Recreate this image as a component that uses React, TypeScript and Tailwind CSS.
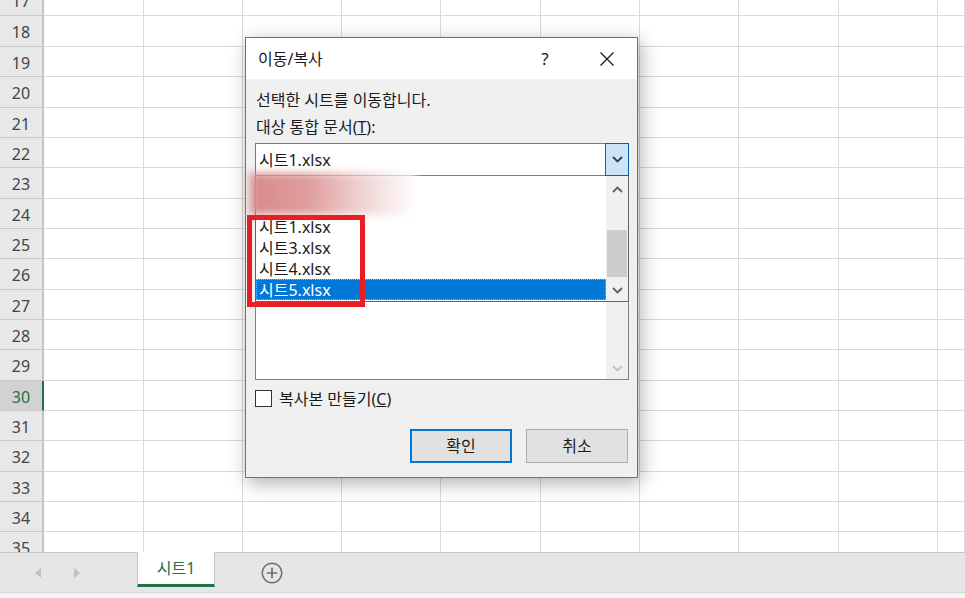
import React from "react";

const FONT = "font-['Noto_Sans','Noto_Sans_CJK_KR',sans-serif]";

// row number + height (px, incl. bottom border)
const ROWS: { n: number; h: string }[] = [
  { n: 17, h: "h-[31px]" },
  { n: 18, h: "h-[31px]" },
  { n: 19, h: "h-[30px]" },
  { n: 20, h: "h-[31px]" },
  { n: 21, h: "h-[30px]" },
  { n: 22, h: "h-[30px]" },
  { n: 23, h: "h-[31px]" },
  { n: 24, h: "h-[30px]" },
  { n: 25, h: "h-[30px]" },
  { n: 26, h: "h-[31px]" },
  { n: 27, h: "h-[30px]" },
  { n: 28, h: "h-[30px]" },
  { n: 29, h: "h-[31px]" },
  { n: 30, h: "h-[30px]" },
  { n: 31, h: "h-[30px]" },
  { n: 32, h: "h-[31px]" },
  { n: 33, h: "h-[30px]" },
  { n: 34, h: "h-[30px]" },
  { n: 35, h: "h-[31px]" },
];

const COLS = 10;

function Chevron({ up = false, color = "#5f5f5f" }: { up?: boolean; color?: string }) {
  return (
    <svg width="11" height="7" viewBox="0 0 11 7">
      <path
        d={up ? "M1 6 L5.5 1.5 L10 6" : "M1 1 L5.5 5.5 L10 1"}
        fill="none"
        stroke={color}
        strokeWidth="1.8"
      />
    </svg>
  );
}

function Sheet() {
  return (
    <div className="h-[552px] overflow-hidden bg-white">
      <div className="-mt-[15px]">
        {ROWS.map((r) => {
          const active = r.n === 30;
          return (
            <div
              key={r.n}
              className={`grid grid-cols-[44px_100px_99px_99px_99px_100px_99px_99px_100px_99px_1fr] ${r.h}`}
            >
              <div
                className={`flex items-center justify-center border-b border-[#c9c9c9] text-[16px] leading-none pt-[2px] ${
                  active
                    ? "bg-[#d2d2d2] text-[#217346] border-r-2 border-r-[#217346]"
                    : "bg-[#e8e8e8] text-[#444] border-r-2 border-r-[#c4c4c4]"
                }`}
              >
                {r.n}
              </div>
              {Array.from({ length: COLS }).map((_, i) => (
                <div key={i} className="border-b border-r border-[#dadada]" />
              ))}
            </div>
          );
        })}
      </div>
    </div>
  );
}

function TabBar() {
  return (
    <div className="h-[46px] flex flex-col">
      <div className="h-[40px] bg-[#e6e6e6] border-t border-[#c6c6c6] flex">
        <div className="w-[137px] flex items-center">
          <div className="w-[41px] flex justify-end">
            <svg width="6" height="10" viewBox="0 0 6 10">
              <path d="M6 0 L0 5 L6 10 Z" fill="#c2c2c2" />
            </svg>
          </div>
          <div className="w-[39px] flex justify-end">
            <svg width="6" height="10" viewBox="0 0 6 10">
              <path d="M0 0 L6 5 L0 10 Z" fill="#c2c2c2" />
            </svg>
          </div>
        </div>
        <div className="-mt-px w-[78px] h-[35px] bg-white border-x border-[#c6c6c6] border-b-[3px] border-b-[#217346] flex items-center justify-center text-[16px] text-[#217346] leading-none">
          시트1
        </div>
        <div className="ml-[46px] flex items-center">
          <svg width="22" height="22" viewBox="0 0 22 22">
            <circle cx="11" cy="11" r="9.8" fill="none" stroke="#6e6e6e" strokeWidth="1.5" />
            <path d="M11 5.8 V16.2 M5.8 11 H16.2" stroke="#6e6e6e" strokeWidth="1.7" />
          </svg>
        </div>
      </div>
      <div className="flex-1 bg-[#f3f3f3] border-t border-[#d6d6d6]" />
    </div>
  );
}

function Dialog() {
  return (
    <div className="absolute left-[245px] top-[37px] w-[393px] h-[441px] border border-[#707070] bg-[#f0f0f0] shadow-[3px_5px_18px_rgba(0,0,0,0.32)] flex flex-col text-[#1a1a1a]">
      {/* title */}
      <div className="h-[41px] bg-white flex items-center pl-[12px] pr-[22px]">
        <span className="text-[16px] leading-none flex-1">이동/복사</span>
        <span className="text-[17px] leading-none w-[12px] text-center">?</span>
        <div className="ml-[48px]">
          <svg width="16" height="16" viewBox="0 0 16 16">
            <path d="M1.5 1.5 L14.5 14.5 M14.5 1.5 L1.5 14.5" stroke="#1a1a1a" strokeWidth="1.3" />
          </svg>
        </div>
      </div>

      {/* body */}
      <div className="flex-1 pl-[9px] pr-[8px] pt-[11px] text-[16px]">
        <div className="h-[20px] leading-[20px] pl-px">선택한 시트를 이동합니다.</div>
        <div className="mt-[7px] h-[20px] leading-[20px] pl-px">
          대상 통합 문서(<span className="underline">T</span>):
        </div>

        <div className="relative mt-[6px]">
          {/* combobox */}
          <div className="h-[33px] bg-white border border-[#7a7a7a] flex">
            <div className="flex-1 flex items-center pl-[3px] leading-none">시트1.xlsx</div>
            <div className="w-[24px] -my-px -mr-px bg-[#cce4f7] border border-[#0b5fad] flex items-center justify-center">
              <Chevron color="#3a3a3a" />
            </div>
          </div>

          {/* sheet listbox behind */}
          <div className="mt-[4px] h-[200px] bg-white border border-[#828282] flex">
            <div className="flex-1" />
            <div className="w-[22px] bg-[#f0f0f0] flex flex-col justify-end items-center pb-[7px]">
              <Chevron color="#c4c4c4" />
            </div>
          </div>

          {/* dropdown popup */}
          <div className="absolute left-0 right-0 top-[33px] h-[126px] bg-white border-x border-b border-[#646464] flex">
            <div className="flex-1 flex flex-col">
              <div className="h-[40px]" />
              {["시트1.xlsx", "시트3.xlsx", "시트4.xlsx"].map((t) => (
                <div key={t} className="h-[21px] flex items-center pl-[3px] leading-none">
                  {t}
                </div>
              ))}
              <div className="h-[21px] flex items-center pl-[2px] leading-none bg-[#0078d7] text-white border border-dotted border-[#f5a04a]">
                시트5.xlsx
              </div>
            </div>
            <div className="w-[22px] bg-[#f0f0f0] flex flex-col">
              <div className="h-[27px] flex items-center justify-center">
                <Chevron up />
              </div>
              <div className="h-[27px]" />
              <div className="h-[47px] mx-px bg-[#cdcdcd]" />
              <div className="flex-1" />
              <div className="h-[21px] flex items-center justify-center">
                <Chevron />
              </div>
            </div>
          </div>
        </div>

        {/* checkbox */}
        <div className="mt-[10px] flex items-center h-[17px]">
          <div className="w-[17px] h-[17px] bg-white border border-[#333]" />
          <span className="ml-[7px] leading-none">
            복사본 만들기(<span className="underline">C</span>)
          </span>
        </div>

        {/* buttons */}
        <div className="mt-[22px] flex justify-end gap-[14px] pr-px">
          <div className="w-[102px] h-[34px] bg-[#e1e1e1] border-2 border-[#0078d7] flex items-center justify-center leading-none">
            확인
          </div>
          <div className="w-[102px] h-[34px] bg-[#e1e1e1] border border-[#adadad] flex items-center justify-center leading-none">
            취소
          </div>
        </div>
      </div>
    </div>
  );
}

export default function App() {
  return (
    <div className={`relative w-[965px] h-[598px] overflow-hidden bg-white ${FONT}`}>
      <Sheet />
      <TabBar />
      <Dialog />

      {/* redacted entry */}
      <div className="absolute left-[250px] top-[173px] w-[166px] h-[42px] blur-[4px] bg-[linear-gradient(90deg,#d88a8a_0%,#df9d9d_35%,#efcfcf_65%,#ffffff_100%)]" />

      {/* red highlight */}
      <div className="absolute left-[247px] top-[215px] w-[118px] h-[92px] border-[5px] border-[#e81e25]" />
    </div>
  );
}
